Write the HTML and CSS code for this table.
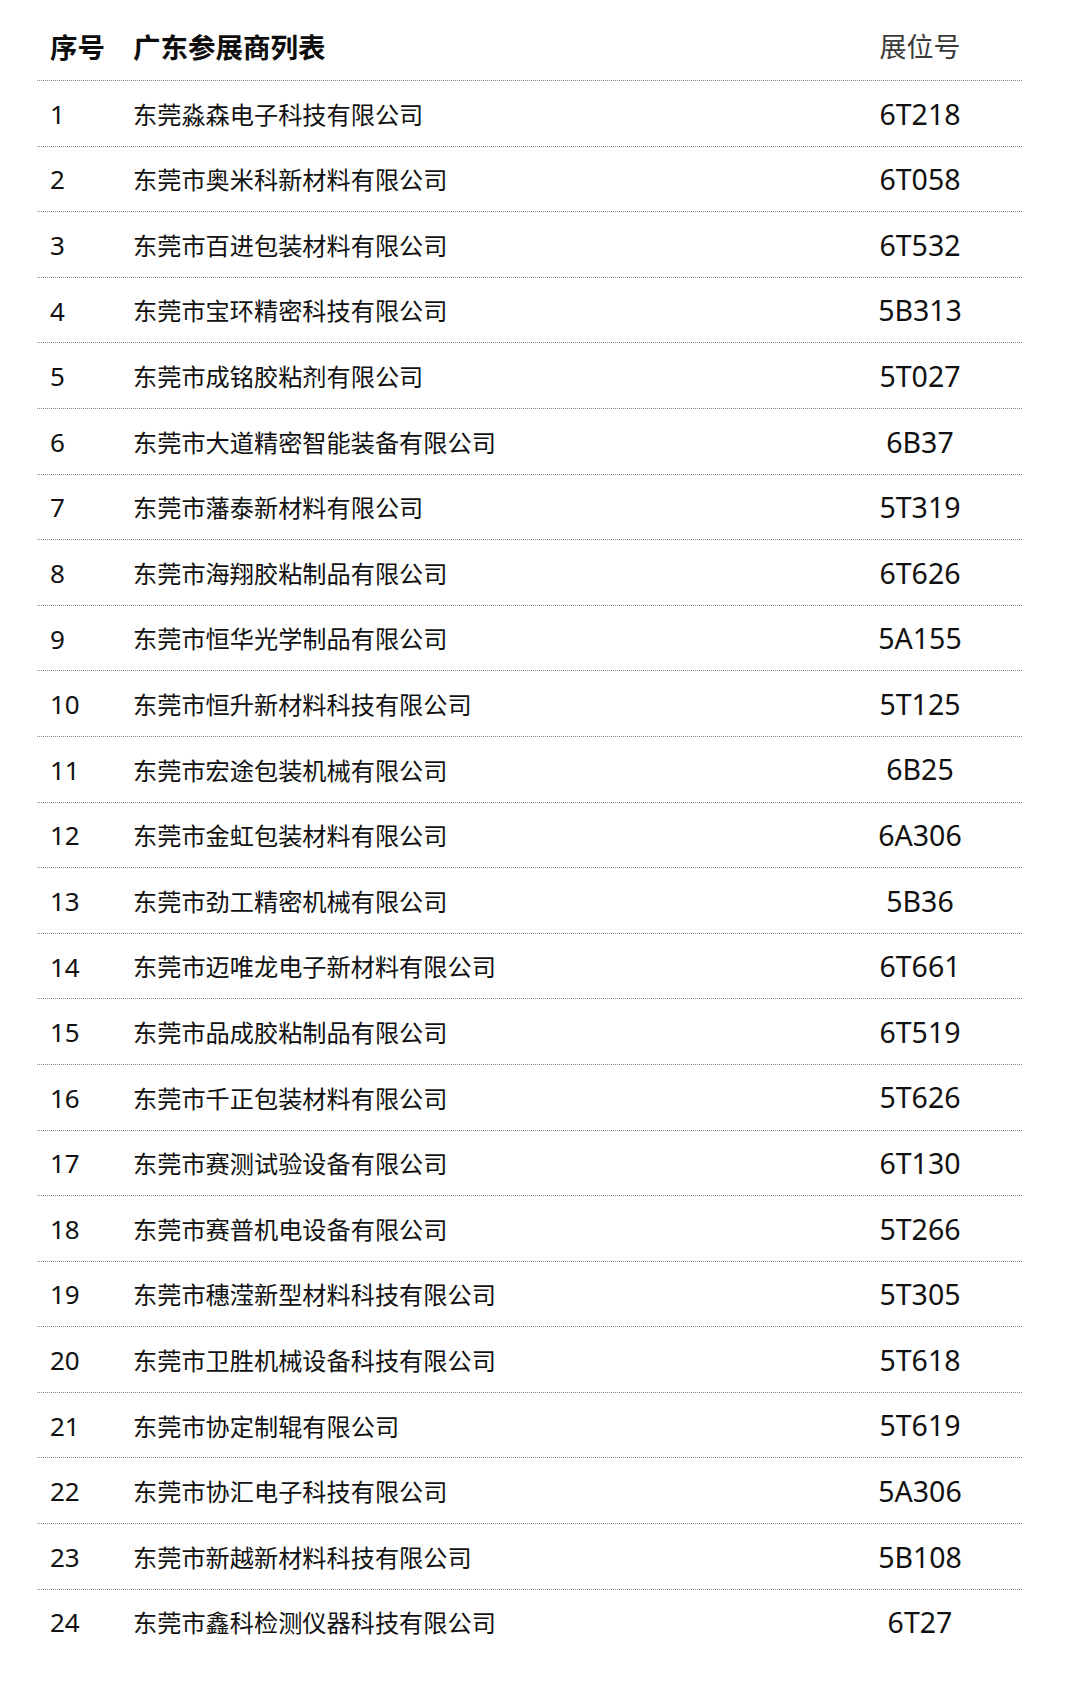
FILE: index.html
```html
<!DOCTYPE html>
<html lang="zh-CN">
<head>
<meta charset="utf-8">
<title>广东参展商列表</title>
<link rel="stylesheet" href="styles.css">
</head>
<body>
<div class="table">
  <div class="head">
    <div class="h-num">序号</div>
    <div class="h-name">广东参展商列表</div>
    <div class="h-code">展位号</div>
  </div>
  <div class="row"><div class="num">1</div><div class="name">东莞淼森电子科技有限公司</div><div class="code">6T218</div></div>
  <div class="row"><div class="num">2</div><div class="name">东莞市奥米科新材料有限公司</div><div class="code">6T058</div></div>
  <div class="row"><div class="num">3</div><div class="name">东莞市百进包装材料有限公司</div><div class="code">6T532</div></div>
  <div class="row"><div class="num">4</div><div class="name">东莞市宝环精密科技有限公司</div><div class="code">5B313</div></div>
  <div class="row"><div class="num">5</div><div class="name">东莞市成铭胶粘剂有限公司</div><div class="code">5T027</div></div>
  <div class="row"><div class="num">6</div><div class="name">东莞市大道精密智能装备有限公司</div><div class="code">6B37</div></div>
  <div class="row"><div class="num">7</div><div class="name">东莞市藩泰新材料有限公司</div><div class="code">5T319</div></div>
  <div class="row"><div class="num">8</div><div class="name">东莞市海翔胶粘制品有限公司</div><div class="code">6T626</div></div>
  <div class="row"><div class="num">9</div><div class="name">东莞市恒华光学制品有限公司</div><div class="code">5A155</div></div>
  <div class="row"><div class="num">10</div><div class="name">东莞市恒升新材料科技有限公司</div><div class="code">5T125</div></div>
  <div class="row"><div class="num">11</div><div class="name">东莞市宏途包装机械有限公司</div><div class="code">6B25</div></div>
  <div class="row"><div class="num">12</div><div class="name">东莞市金虹包装材料有限公司</div><div class="code">6A306</div></div>
  <div class="row"><div class="num">13</div><div class="name">东莞市劲工精密机械有限公司</div><div class="code">5B36</div></div>
  <div class="row"><div class="num">14</div><div class="name">东莞市迈唯龙电子新材料有限公司</div><div class="code">6T661</div></div>
  <div class="row"><div class="num">15</div><div class="name">东莞市品成胶粘制品有限公司</div><div class="code">6T519</div></div>
  <div class="row"><div class="num">16</div><div class="name">东莞市千正包装材料有限公司</div><div class="code">5T626</div></div>
  <div class="row"><div class="num">17</div><div class="name">东莞市赛测试验设备有限公司</div><div class="code">6T130</div></div>
  <div class="row"><div class="num">18</div><div class="name">东莞市赛普机电设备有限公司</div><div class="code">5T266</div></div>
  <div class="row"><div class="num">19</div><div class="name">东莞市穗滢新型材料科技有限公司</div><div class="code">5T305</div></div>
  <div class="row"><div class="num">20</div><div class="name">东莞市卫胜机械设备科技有限公司</div><div class="code">5T618</div></div>
  <div class="row"><div class="num">21</div><div class="name">东莞市协定制辊有限公司</div><div class="code">5T619</div></div>
  <div class="row"><div class="num">22</div><div class="name">东莞市协汇电子科技有限公司</div><div class="code">5A306</div></div>
  <div class="row"><div class="num">23</div><div class="name">东莞市新越新材料科技有限公司</div><div class="code">5B108</div></div>
  <div class="row"><div class="num">24</div><div class="name">东莞市鑫科检测仪器科技有限公司</div><div class="code">6T27</div></div>
</div>
</body>
</html>
```

FILE: styles.css
```css
html, body {
  margin: 0;
  padding: 0;
  background: #ffffff;
}

body {
  color: #111111;
  font-family: "Noto Sans", "Noto Sans CJK SC", sans-serif;
}

.table {
  margin-left: 37px;
  width: 985px;
}

.head,
.row {
  display: grid;
  grid-template-columns: 83px 1fr 120px;
  align-items: center;
  padding-left: 13px;
  padding-right: 42px;
  box-sizing: border-box;
}

.head {
  height: 80px;
  padding-top: 11px;
}

.h-num,
.h-name {
  font-family: "Noto Sans CJK SC", sans-serif;
  font-weight: 700;
  font-size: 27.5px;
  color: #0d0d0d;
  white-space: nowrap;
}

.h-code {
  font-family: "Noto Sans CJK SC", serif;
  font-weight: 400;
  font-size: 27px;
  color: #3a3a3a;
  text-align: center;
}

.row {
  height: 65.6px;
  border-top: 1px dotted #8a8a8a;
  padding-top: 1px;
}

.num {
  font-family: "Noto Sans", sans-serif;
  font-size: 26px;
  line-height: 1;
}

.name {
  font-family: "Noto Sans CJK SC", sans-serif;
  font-size: 24.2px;
  line-height: 1;
  white-space: nowrap;
}

.code {
  font-family: "Noto Sans", sans-serif;
  font-size: 28.5px;
  line-height: 1;
  text-align: center;
}
```
